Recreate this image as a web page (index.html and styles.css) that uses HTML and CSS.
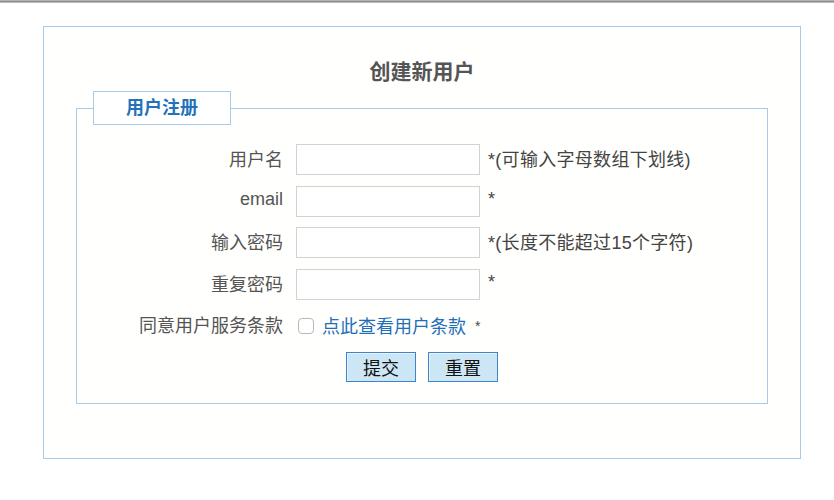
FILE: index.html
```html
<!DOCTYPE html>
<html lang="zh-CN">
<head>
  <meta charset="UTF-8">
  <title>创建新用户</title>
  <link rel="stylesheet" href="styles.css">
</head>
<body>
  <div class="topbar"></div>
  <div class="page">
    <h2 class="title">创建新用户</h2>
    <form class="reg">
      <fieldset>
        <legend>用户注册</legend>
        <div class="rows">
          <label for="uname">用户名</label>
          <input type="text" id="uname">
          <span class="hint">*(可输入字母数组下划线)</span>

          <label for="mail">email</label>
          <input type="text" id="mail">
          <span class="hint">*</span>

          <label for="pwd">输入密码</label>
          <input type="password" id="pwd">
          <span class="hint">*(长度不能超过15个字符)</span>

          <label for="pwd2">重复密码</label>
          <input type="password" id="pwd2">
          <span class="hint">*</span>

          <label for="agree">同意用户服务条款</label>
          <div class="agree">
            <input type="checkbox" id="agree">
            <a href="#">点此查看用户条款</a>
            <span class="star">*</span>
          </div>
        </div>
        <div class="actions">
          <button type="submit">提交</button>
          <button type="reset">重置</button>
        </div>
      </fieldset>
    </form>
  </div>
</body>
</html>
```

FILE: styles.css
```css
body { margin: 0; background: #fff; font-family: "Liberation Sans", "Noto Sans CJK SC", sans-serif; color: #555; }
.topbar { height: 3px; background: linear-gradient(#c4c4c4, #8f8f8f 50%, #cfcfcf); }

.page {
  margin: 23px 0 0 43px; width: 758px; height: 433px; box-sizing: border-box;
  border: 1px solid #a9cbe8; background: #fffffd;
}
.title {
  margin: 31px 0 0; text-align: center; font-size: 21px; line-height: 28px;
  font-weight: bold; color: #555;
}

.reg { margin: 5px 32px 0; }
fieldset {
  margin: 0; padding: 0 0 21px; border: 1px solid #a9cbe8;
}
legend {
  margin-left: 16px; padding: 0 32px; height: 32px; line-height: 32px;
  border: 1px solid #a9cbe8; background: #fff;
  font-size: 18px; font-weight: bold; color: #2472b8;
}

.rows {
  display: grid; grid-template-columns: 219px 184px auto;
  grid-auto-rows: 31px; row-gap: 10.5px; align-items: center;
  margin-top: 19px;
}
.rows label { text-align: right; padding: 0 13px 3px 0; font-size: 18px; color: #555; }
.rows input[type=text], .rows input[type=password] {
  width: 184px; height: 31px; box-sizing: border-box; margin: 0;
  border: 1px solid #d2d2d2; background: #fff;
}
.hint { padding: 0 0 3px 8px; font-size: 18px; letter-spacing: 0.3px; color: #444; }

.agree { grid-column: span 2; display: flex; align-items: center; font-size: 18px; }
.agree input {
  appearance: none; width: 16px; height: 16px; margin: 0 8px 0 2px;
  border: 1px solid #b8b8b8; border-radius: 4px; background: #fff;
}
.agree a { color: #1f6fb8; text-decoration: none; padding-bottom: 2px; }
.agree .star { margin-left: 9px; font-size: 14px; color: #444; }

.actions { display: flex; justify-content: center; gap: 12px; margin-top: 11px; }
.actions button {
  width: 70px; height: 30px; padding: 0;
  border: 1px solid #3d85c6; background: #cde6f6;
  font-family: inherit; font-size: 18px; color: #111;
  box-shadow: inset 1px 1px 0 #e6f3fb;
}
```
